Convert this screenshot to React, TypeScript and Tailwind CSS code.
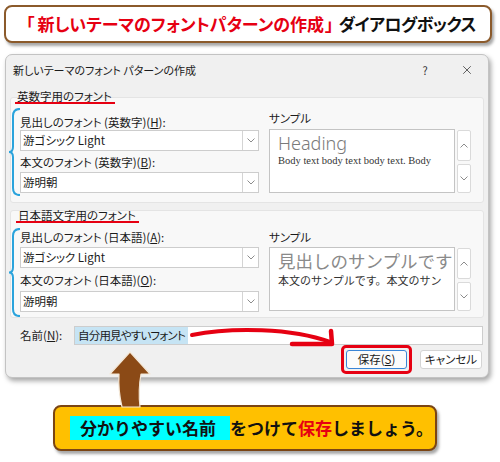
import { X } from 'lucide-react';

// small chevron used by the dropdowns and the spin buttons
const Chevron = ({ up = false }: { up?: boolean }) => (
  <svg width="8" height="5" viewBox="0 0 8 5">
    <polyline
      points={up ? '0.5,4.5 4,1 7.5,4.5' : '0.5,0.5 4,4 7.5,0.5'}
      fill="none"
      stroke="#8c8c8c"
      strokeWidth="1"
    />
  </svg>
);

const Dropdown = ({ value, className }: { value: string; className: string }) => (
  <div className={`flex h-[21px] w-[239px] border border-[#cdcdcd] bg-white ${className}`}>
    <div className="flex flex-1 items-center pl-[2px] text-[11.5px] text-[#1b1b1b]">{value}</div>
    <div className="flex w-[16px] items-center justify-center border-l border-[#d4d4d4]">
      <Chevron />
    </div>
  </div>
);

const Brace = ({ className }: { className: string }) => (
  <svg className={`pointer-events-none absolute left-[-3px] w-[13px] ${className}`} viewBox="0 0 13 100" preserveAspectRatio="none">
    <path
      d="M12 1 Q5 1 5 9 L5 44 Q5 50 1 50 Q5 50 5 56 L5 91 Q5 99 12 99"
      fill="none"
      stroke="#2aa3dc"
      strokeWidth="2"
      vectorEffect="non-scaling-stroke"
    />
  </svg>
);

const Label = ({ children, className = '' }: { children: React.ReactNode; className?: string }) => (
  <div className={`h-[14px] whitespace-nowrap text-[11.5px] leading-[14px] text-[#1b1b1b] ${className}`}>{children}</div>
);

const Sample = ({ heading, body, headingClass, bodyClass, boxClass }: {
  heading: string;
  body: string;
  headingClass: string;
  bodyClass: string;
  boxClass: string;
}) => (
  <div className={`flex ${boxClass}`}>
    <div className="h-[64px] w-[186px] overflow-hidden border border-[#c4c4c4] bg-white pl-[8px] pt-[2px]">
      <div className={`whitespace-nowrap leading-[22px] ${headingClass}`}>{heading}</div>
      <div className={`whitespace-nowrap text-[#333] ${bodyClass}`}>{body}</div>
    </div>
    <div className="ml-[2px] flex flex-col justify-between pt-[1px]">
      <div className="flex h-[31px] w-[14px] items-center justify-center rounded-[2px] border border-[#dadada] bg-white">
        <Chevron up />
      </div>
      <div className="flex h-[29px] w-[14px] items-center justify-center rounded-[2px] border border-[#dadada] bg-white">
        <Chevron />
      </div>
    </div>
  </div>
);

export default function App() {
  return (
    <div className="relative h-[462px] w-[500px] overflow-hidden bg-white pt-[5px] font-['Noto_Sans_CJK_JP',sans-serif]">
      {/* headline */}
      <div className="ml-[4px] flex h-[38px] w-[488px] items-center whitespace-nowrap rounded-[8px] border-2 border-[#8b5a2b] bg-white pl-[20px] text-[17px] font-bold shadow-[2px_3px_3px_rgba(0,0,0,0.35)] [font-feature-settings:'palt']">
        <span className="mr-[3px] text-[#e60012]">「</span>
        <span className="text-[#e60012]">新しいテーマのフォントパターンの作成</span>
        <span className="ml-[1px] mr-[5px] text-[#e60012]">」</span>
        <span className="tracking-[-0.6px] text-[#111]">ダイアログボックス</span>
      </div>

      {/* dialog */}
      <div className="ml-[5px] mt-[11px] w-[484px] rounded-[7px] border border-[#c3c3c3] bg-[#f0f0f0] pb-[3px] shadow-[2px_3px_5px_rgba(0,0,0,0.35)] [font-feature-settings:'palt']">
        <div className="flex h-[30px] items-center pl-[7px] pr-[11px]">
          <span className="text-[11px] text-[#1b1b1b]">新しいテーマのフォント パターンの作成</span>
          <span className="ml-auto flex w-[20px] justify-center text-[11px] text-[#333]">?</span>
          <span className="ml-[22px] flex w-[20px] justify-center">
            <X size={14} strokeWidth={1.2} color="#222" />
          </span>
        </div>

        {/* latin fonts */}
        <div className="relative mx-[4px] mt-[12px] rounded-[3px] border border-[#e4e4e4] bg-[#f8f8f8] pb-[9px]">
          <div className="mt-[-8px] flex h-[14px] pl-[6px]">
            <span className="ml-[-2px] h-[14px] border-b-2 border-[#e60012] pl-[2px] pr-[3px] text-[11.5px] leading-[12px] text-[#1b1b1b]">英数字用のフォント</span>
          </div>
          <Brace className="top-[10px] h-[88px]" />
          <div className="mt-[7px] flex gap-[10px] pl-[9px]">
            <div className="pt-[4px]">
              <Label>見出しのフォント (英数字)(<span className="underline">H</span>):</Label>
              <Dropdown value="游ゴシック Light" className="mt-[1px]" />
              <Label className="mt-[4px]">本文のフォント (英数字)(<span className="underline">B</span>):</Label>
              <Dropdown value="游明朝" className="mt-[3px]" />
            </div>
            <div>
              <Label>サンプル</Label>
              <Sample
                boxClass="mt-[4px]"
                heading="Heading"
                headingClass="text-[18px] text-[#7a7a7a] font-['Noto_Sans',sans-serif] font-light"
                body="Body text body text body text. Body"
                bodyClass="text-[10.5px] leading-[13px] font-['Liberation_Serif',serif]"
              />
            </div>
          </div>
        </div>

        {/* japanese fonts */}
        <div className="relative mx-[4px] mt-[7px] rounded-[3px] border border-[#e4e4e4] bg-[#f8f8f8] pb-[5px]">
          <div className="mt-[-2px] flex h-[14px] pl-[7px]">
            <span className="ml-[-2px] h-[14px] border-b-2 border-[#e60012] pl-[2px] pr-[3px] text-[11.5px] leading-[12px] text-[#1b1b1b]">日本語文字用のフォント</span>
          </div>
          <Brace className="top-[17px] h-[89px]" />
          <div className="mt-[7px] flex gap-[10px] pl-[9px]">
            <div>
              <Label>見出しのフォント (日本語)(<span className="underline">A</span>):</Label>
              <Dropdown value="游ゴシック Light" className="mt-[3px]" />
              <Label className="mt-[5px]">本文のフォント (日本語)(<span className="underline">O</span>):</Label>
              <Dropdown value="游明朝" className="mt-[4px]" />
            </div>
            <div>
              <Label>サンプル</Label>
              <Sample
                boxClass="mt-[3px]"
                heading="見出しのサンプルです"
                headingClass="text-[17.5px] text-[#8a8a8a] [font-feature-settings:normal]"
                body="本文のサンプルです。本文のサン"
                bodyClass="mt-[2px] text-[11px] leading-[14px] font-['Liberation_Serif','Noto_Sans_CJK_JP',serif] [font-feature-settings:normal]"
              />
            </div>
          </div>
        </div>

        {/* name */}
        <div className="mt-[8px] flex h-[19px] items-center pl-[14px] pr-[5px]">
          <span className="w-[54px] text-[11.5px] text-[#1b1b1b]">
            名前(<span className="underline">N</span>):
          </span>
          <div className="flex h-full flex-1 border border-[#cdcdcd] bg-white">
            <span className="h-full bg-[#c6e4f4] px-[3px] text-[11.5px] leading-[17px] tracking-[-0.8px] text-[#1b1b1b]">自分用見やすいフォント</span>
          </div>
        </div>

        {/* buttons */}
        <div className="flex items-center justify-end gap-[8px] pr-[6px]">
          <div className="rounded-[5px] border-[3px] border-[#e60012] p-[2px]">
            <button className="flex h-[19px] w-[61px] items-center justify-center rounded-[3px] border border-[#3a85d6] bg-[#fbfbfb] text-[11.5px] text-[#1b1b1b]">
              保存(<span className="underline">S</span>)
            </button>
          </div>
          <button className="flex h-[19px] w-[62px] items-center justify-center rounded-[3px] border border-[#d4d4d4] bg-white text-[11.5px] text-[#1b1b1b]">
            キャンセル
          </button>
        </div>
      </div>

      {/* callout */}
      <div className="ml-[53px] mt-[27px] flex h-[46px] w-[384px] items-center whitespace-nowrap rounded-[8px] border-2 border-[#7b4514] bg-[#ffc000] pl-[15px] text-[17px] font-bold text-[#111] shadow-[2px_3px_3px_rgba(0,0,0,0.35)]">
        <span className="flex h-[24px] items-center bg-[#00ffff] pl-[10px] pr-[14px]">分かりやすい名前</span>
        <span>
          をつけて<span className="text-[#e60012]">保存</span>しましょう。
        </span>
      </div>

      {/* annotation arrows */}
      <svg className="pointer-events-none absolute left-0 top-0" width="500" height="462" viewBox="0 0 500 462">
        <path d="M192 335 C232 327 292 328 330 342" fill="none" stroke="#e60012" strokeWidth="4" strokeLinecap="round" />
        <path d="M292 344 L332 344 L331 331" fill="none" stroke="#e60012" strokeWidth="4.5" strokeLinecap="round" strokeLinejoin="round" />
        <path
          d="M130 352 L150 374 L141 374 Q138 390 140 407 L122 407 Q118 390 119 374 L110 374 Z"
          fill="#8b4a16"
          stroke="#f3e7d6"
          strokeWidth="1.2"
          strokeLinejoin="round"
        />
      </svg>
    </div>
  );
}
